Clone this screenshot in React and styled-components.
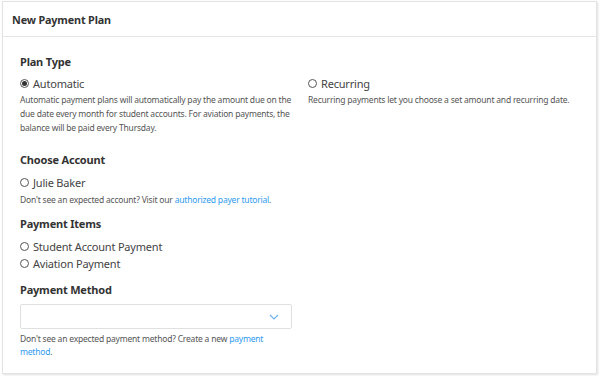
import React from "react";
import styled, { createGlobalStyle } from "styled-components";

const Global = createGlobalStyle`
  html, body { margin: 0; padding: 0; background: #fff; }
  body { font-family: "Noto Sans", "Open Sans", sans-serif; color: #333; }
  * { box-sizing: border-box; }
`;

const Page = styled.div`
  padding: 1px 3px 2px 2px;
  width: 600px;
  height: 376px;
`;

const Card = styled.div`
  border: 1px solid #e3e3e3;
  background: #fff;
  box-shadow: 1px 1px 2px rgba(0,0,0,0.12);
  height: 100%;
  display: flex;
  flex-direction: column;
`;

const Header = styled.div`
  height: 35px;
  border-bottom: 1px solid #e6e6e6;
  display: flex;
  align-items: center;
  padding-left: 9px;
  font-size: 10.8px;
  letter-spacing: -0.15px;
  font-weight: 700;
  color: #333;
`;

const Body = styled.div`
  padding: 14px 17px 0 17px;
  display: flex;
  flex-direction: column;
`;

const SectionTitle = styled.div`
  font-size: 11px;
  letter-spacing: -0.2px;
  font-weight: 700;
  color: #333;
  line-height: 18px;
  margin-top: ${p => p.$mt || 0}px;
`;

const Columns = styled.div`
  display: grid;
  grid-template-columns: 288px 1fr;
`;

const Col = styled.div`
  display: flex;
  flex-direction: column;
  padding-right: ${p => p.$pr || 0}px;
`;

const RadioRow = styled.label`
  display: flex;
  align-items: center;
  gap: 4px;
  font-size: 11px;
  letter-spacing: -0.2px;
  color: #444;
  height: ${p => p.$h || 17}px;
  margin-top: ${p => p.$mt || 0}px;
  flex: none;
`;

const Circle = styled.span`
  width: 9px;
  height: 9px;
  border-radius: 50%;
  border: 1px solid #555;
  display: inline-flex;
  align-items: center;
  justify-content: center;
  flex: none;
  &::after {
    content: "";
    width: 5px;
    height: 5px;
    border-radius: 50%;
    background: ${p => (p.$checked ? "#333" : "transparent")};
  }
`;

const Help = styled.div`
  font-size: 8.5px;
  letter-spacing: -0.2px;
  line-height: ${p => p.$lh || 14}px;
  color: #555;
  margin-top: ${p => p.$mt || 0}px;
  width: ${p => (p.$w ? `${p.$w}px` : "auto")};
`;

const Link = styled.a`
  color: #2e9bf0;
  text-decoration: none;
`;

const Select = styled.div`
  width: 272px;
  height: 25px;
  border: 1px solid #e0e0e0;
  border-radius: 2px;
  display: flex;
  align-items: center;
  justify-content: flex-end;
  padding-right: 12px;
  margin-top: 5px;
`;

function Radio({ checked, children, h, mt }) {
  return (
    <RadioRow $h={h} $mt={mt}>
      <Circle $checked={checked} />
      {children}
    </RadioRow>
  );
}

export default function App() {
  return (
    <>
      <Global />
      <Page>
        <Card>
          <Header>New Payment Plan</Header>
          <Body>
            <SectionTitle $mt={2}>Plan Type</SectionTitle>
            <Columns>
              <Col $pr={14}>
                <Radio checked h={18} mt={3}>Automatic</Radio>
                <Help $mt={1}>
                  Automatic payment plans will automatically pay the amount due on the
                  due date every month for student accounts. For aviation payments, the
                  balance will be paid every Thursday.
                </Help>
              </Col>
              <Col>
                <Radio h={18} mt={3}>Recurring</Radio>
                <Help $mt={1}>Recurring payments let you choose a set amount and recurring date.</Help>
              </Col>
            </Columns>
            <SectionTitle $mt={16}>Choose Account</SectionTitle>
            <Radio h={20} mt={3}>Julie Baker</Radio>
            <Help $mt={1}>
              Don't see an expected account? Visit our <Link>authorized payer tutorial</Link>.
            </Help>
            <SectionTitle $mt={8}>Payment Items</SectionTitle>
            <Radio h={17} mt={5}>Student Account Payment</Radio>
            <Radio h={17}>Aviation Payment</Radio>
            <SectionTitle $mt={9}>Payment Method</SectionTitle>
            <Select>
              <svg width="10" height="6" viewBox="0 0 10 6">
                <path d="M1 1 L5 5 L9 1" fill="none" stroke="#6fb3f0" strokeWidth="1.2" />
              </svg>
            </Select>
            <Help $mt={3} $lh={13} $w={272}>
              Don't see an expected payment method? Create a new <Link>payment method</Link>.
            </Help>
          </Body>
        </Card>
      </Page>
    </>
  );
}
